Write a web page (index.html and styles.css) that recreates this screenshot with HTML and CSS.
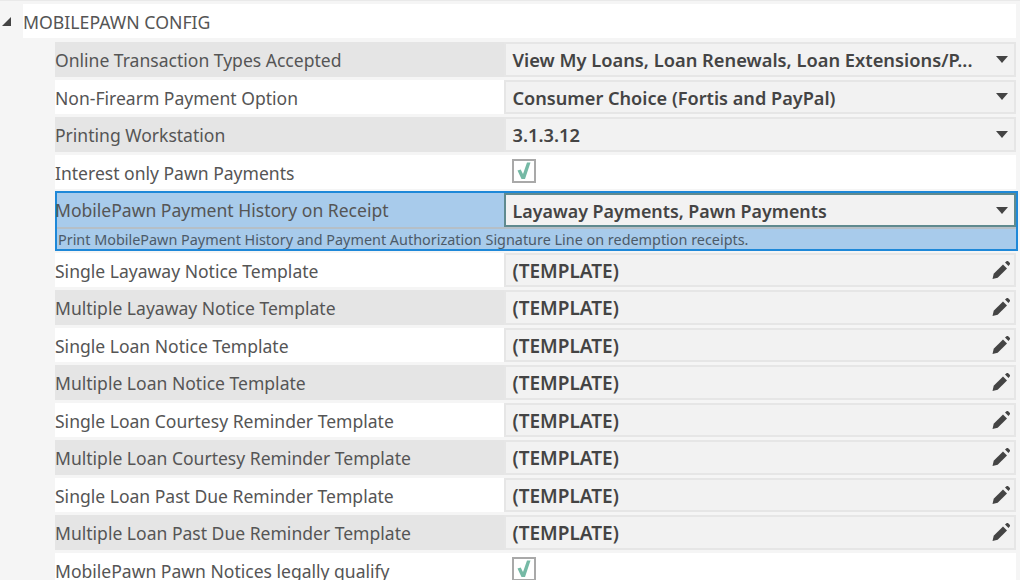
FILE: index.html
```html
<!DOCTYPE html>
<html lang="en">
<head>
<meta charset="utf-8">
<title>MobilePawn Config</title>
<link rel="stylesheet" href="styles.css">
</head>
<body>
<svg class="defs" width="0" height="0" aria-hidden="true">
  <symbol id="pencil" viewBox="0 0 18 18">
    <path d="M0.500 18l1.200-5.200L11 3.500l4 4L5.700 16.800z" fill="#444"/>
    <path d="M13 1.500L14.500 0.300a1.300 1.300 0 0 1 1.700 0l1.500 1.500a1.300 1.300 0 0 1 0 1.700L16.500 5z" fill="#444"/>
  </symbol>
  <symbol id="check" viewBox="0 0 20 20">
    <path d="M3.500 9.500l3.200-1 2.300 4.600L13 1.500h3.500L11 18H7.500z" fill="#75b9a5"/>
  </symbol>
</svg>
<main class="panel">
  <div class="group-row">
    <span class="expander"></span>
    <span class="group-title">MOBILEPAWN CONFIG</span>
  </div>
  <div class="rows">
    <div class="row shaded"><div class="label">Online Transaction Types Accepted</div><div class="field"><span class="field-text">View My Loans, Loan Renewals, Loan Extensions/P...</span><span class="caret"></span></div></div>
    <div class="row plain"><div class="label">Non-Firearm Payment Option</div><div class="field"><span class="field-text text-choice">Consumer Choice (Fortis and PayPal)</span><span class="caret"></span></div></div>
    <div class="row shaded"><div class="label">Printing Workstation</div><div class="field"><span class="field-text">3.1.3.12</span><span class="caret"></span></div></div>
    <div class="row plain"><div class="label">Interest only Pawn Payments</div><div class="check-cell"><span class="checkbox"><svg class="check-icon"><use href="#check"/></svg></span></div></div>
    <div class="selected">
      <div class="row selected-row"><div class="label label-selected">MobilePawn Payment History on Receipt</div><div class="field field-active"><span class="field-text text-active">Layaway Payments, Pawn Payments</span><span class="caret"></span></div></div>
      <div class="hint">Print MobilePawn Payment History and Payment Authorization Signature Line on redemption receipts.</div>
    </div>
    <div class="row plain"><div class="label">Single Layaway Notice Template</div><div class="field"><span class="field-text text-template">(TEMPLATE)</span><svg class="pencil"><use href="#pencil"/></svg></div></div>
    <div class="row shaded"><div class="label">Multiple Layaway Notice Template</div><div class="field"><span class="field-text text-template">(TEMPLATE)</span><svg class="pencil"><use href="#pencil"/></svg></div></div>
    <div class="row plain"><div class="label">Single Loan Notice Template</div><div class="field"><span class="field-text text-template">(TEMPLATE)</span><svg class="pencil"><use href="#pencil"/></svg></div></div>
    <div class="row shaded"><div class="label">Multiple Loan Notice Template</div><div class="field"><span class="field-text text-template">(TEMPLATE)</span><svg class="pencil"><use href="#pencil"/></svg></div></div>
    <div class="row plain"><div class="label">Single Loan Courtesy Reminder Template</div><div class="field"><span class="field-text text-template">(TEMPLATE)</span><svg class="pencil"><use href="#pencil"/></svg></div></div>
    <div class="row shaded"><div class="label">Multiple Loan Courtesy Reminder Template</div><div class="field"><span class="field-text text-template">(TEMPLATE)</span><svg class="pencil"><use href="#pencil"/></svg></div></div>
    <div class="row plain"><div class="label">Single Loan Past Due Reminder Template</div><div class="field"><span class="field-text text-template">(TEMPLATE)</span><svg class="pencil"><use href="#pencil"/></svg></div></div>
    <div class="row shaded"><div class="label">Multiple Loan Past Due Reminder Template</div><div class="field"><span class="field-text text-template">(TEMPLATE)</span><svg class="pencil"><use href="#pencil"/></svg></div></div>
    <div class="row plain"><div class="label">MobilePawn Pawn Notices legally qualify</div><div class="check-cell"><span class="checkbox"><svg class="check-icon"><use href="#check"/></svg></span></div></div>
  </div>
</main>
</body>
</html>
```
FILE: styles.css
```css
html, body {
  margin: 0;
  height: 580px;
  overflow: hidden;
  background: #f5f5f5;
}
body {
  font-family: "Noto Sans", "Open Sans", sans-serif;
  color: #555;
}
.defs {
  display: block;
  height: 0;
}
.panel {
  border-top: 1px solid #e9e9e9;
  padding: 3px 4px 0 0;
  background: #f5f5f5;
}
.group-row {
  display: flex;
  align-items: center;
  height: 34px;
  margin-bottom: 4px;
}
.expander {
  width: 0;
  height: 0;
  margin-left: 2px;
  margin-right: 12px;
  border-style: solid;
  border-width: 0 0 9px 9px;
  border-color: transparent transparent #444 transparent;
}
.group-title {
  flex: 1;
  background: #fff;
  height: 34px;
  line-height: 37px;
  font-size: 17.700px;
  color: #555;
}
.rows {
  display: flex;
  flex-direction: column;
  gap: 3px;
  padding-left: 55px;
}
.row {
  display: grid;
  grid-template-columns: 449px 512px;
  height: 34.500px;
  flex: none;
}
.shaded { background: #e5e5e5; }
.plain { background: #fff; }
.label {
  align-self: center;
  margin-top: 2px;
  font-size: 17.550px;
  color: #555;
  white-space: nowrap;
}
.label-selected {
  margin-left: -2px;
  margin-top: 0;
}
.field {
  display: flex;
  align-items: center;
  justify-content: space-between;
  box-sizing: border-box;
  height: 100%;
  border: 2px solid #e6e6e6;
  background: #f2f2f2;
  padding: 0 6px 0 6.500px;
}
.field-text {
  font-size: 18.300px;
  font-weight: 600;
  color: #444;
  white-space: nowrap;
}
.text-choice {
  font-size: 18.150px;
  margin-top: 2px;
}
.text-active {
  font-size: 17.850px;
  margin-top: 2px;
}
.text-template {
  font-size: 19px;
  margin-top: 2px;
}
.caret {
  width: 0;
  height: 0;
  border-style: solid;
  border-width: 7px 6.500px 0;
  border-color: #444 transparent transparent;
}
.pencil {
  width: 18px;
  height: 18px;
  margin: 0 -2px 0 0;
}
.check-cell {
  display: flex;
  align-items: center;
  padding-left: 8px;
  margin-top: -1px;
}
.checkbox {
  box-sizing: border-box;
  width: 24px;
  height: 24px;
  border: 2px solid #a9a9a9;
  background: #fff;
  display: flex;
}
.check-icon {
  width: 20px;
  height: 20px;
}
.selected {
  flex: none;
  box-sizing: border-box;
  height: 60px;
  margin: -1px 0 -1.500px;
  width: 963px;
  border: 2px solid #1e88d8;
  background: #a8cbeb;
}
.selected-row {
  grid-template-columns: 447px 512px;
  box-sizing: content-box;
  height: 34px;
  border-bottom: 2px solid #b5bfc7;
}
.field-active {
  border-color: #5f8a8f;
}
.hint {
  font-size: 14.400px;
  color: #4c5a68;
  padding-left: 1px;
  line-height: 22px;
  white-space: nowrap;
}
```
